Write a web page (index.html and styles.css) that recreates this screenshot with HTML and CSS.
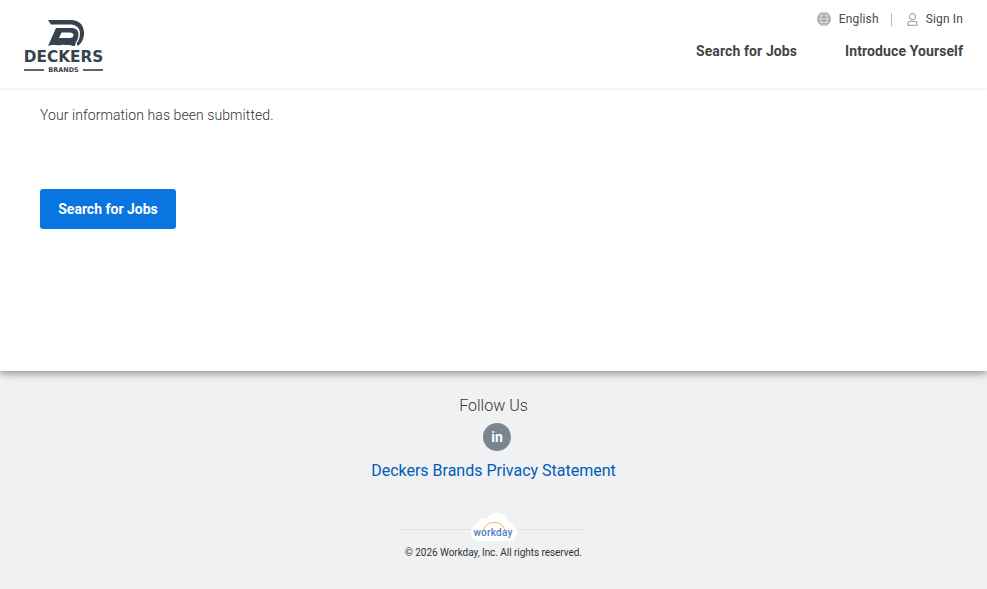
FILE: index.html
```html
<!DOCTYPE html>
<html lang="en">
<head>
    <meta charset="UTF-8">
    <meta name="viewport" content="width=device-width, initial-scale=1.0">
    <title>Deckers Brands Careers</title>
    <link rel="stylesheet" href="styles.css">
</head>
<body>
    <header class="header">
        <a class="logo" href="#">
            <svg class="logo-mark" width="36" height="27" viewBox="0 0 36 27">
                <path fill="#36424d" d="M0 0H23C31 0 36 5 36 13C36 19 33.500 23 30 26L28.500 23.500C30.500 21 32 17.500 32 13.500C32 8 28 4.500 23 4.500H3Z"/>
                <path fill="#36424d" fill-rule="evenodd" d="M8 8H23C27.500 8 30.500 10 30.500 14C30.500 18 29 21 27.500 23C27.500 25 27 26 26 26C24 26 23 24.500 20.500 25C18 25.500 16 24 13 25C9 26 5 24 0 26ZM13.500 12.500L11 18H22C24 18 25.500 17 25.500 15C25.500 13.500 24 12.500 22 12.500Z"/>
            </svg>
            <span class="logo-name">DECKERS</span>
            <span class="logo-sub"><i></i>BRANDS<i></i></span>
        </a>
        <div class="header-right">
            <div class="utility">
                <a class="utility-item" href="#">
                    <svg width="14" height="14" viewBox="0 0 14 14" fill="none" stroke="#e4e5e6" stroke-width="0.8">
                        <circle cx="7" cy="7" r="7" fill="#a6a9ad" stroke="none"/>
                        <ellipse cx="7" cy="7" rx="3" ry="6.500"/>
                        <path d="M0.500 7H13.500M1.500 3.800H12.500M1.500 10.200H12.500"/>
                    </svg>
                    English
                </a>
                <span class="utility-sep"></span>
                <a class="utility-item" href="#">
                    <svg width="11" height="13" viewBox="0 0 11 13" fill="none" stroke="#a9adb1" stroke-width="1.200">
                        <circle cx="5.500" cy="3.700" r="3"/>
                        <path d="M1 12.400V10.500C1 9.200 2.200 8.400 3.500 8.400H7.500C8.800 8.400 10 9.200 10 10.500V12.400Z"/>
                    </svg>
                    Sign In
                </a>
            </div>
            <nav class="nav">
                <a href="#">Search for Jobs</a>
                <a href="#">Introduce Yourself</a>
            </nav>
        </div>
    </header>

    <main class="main">
        <p class="message">Your information has been submitted.</p>
        <a class="btn" href="#">Search for Jobs</a>
    </main>

    <footer class="footer">
        <div class="follow">Follow Us</div>
        <a class="social" href="#">in</a>
        <a class="privacy" href="#">Deckers Brands Privacy Statement</a>
        <div class="powered">
            <svg class="cloud" width="46" height="30" viewBox="0 0 46 30">
                <path fill="#fff" d="M7 29C2 29 0 25 0 21C0 16 3 13 6 12C7 7 12 5 16 7C18 2 24 0 29 1C34 2 37 6 37 10C42 11 46 15 46 20C46 25 43 29 38 29Z"/>
                <path fill="none" stroke="#f2b73f" stroke-width="1" d="M12.500 18C15 8 31 8 34 18"/>
                <text x="22" y="23.500" text-anchor="middle" class="cloud-text">workday</text>
            </svg>
        </div>
        <div class="copyright">© 2026 Workday, Inc. All rights reserved.</div>
    </footer>
</body>
</html>
```

FILE: styles.css
```css
* {
    box-sizing: border-box;
}
html, body {
    height: 100%;
}
body {
    margin: 0;
    font-family: Roboto, "Liberation Sans", sans-serif;
    color: #333;
    background: #f0f1f2;
    overflow: hidden;
}
a {
    text-decoration: none;
    color: inherit;
}
.header {
    height: 88px;
    display: flex;
    justify-content: space-between;
    padding: 0 24px;
    background: #fff;
    box-shadow: 0 1px 4px rgba(0, 0, 0, 0.08);
    position: relative;
    z-index: 1;
}
.logo {
    width: 79px;
    padding-top: 20px;
    display: flex;
    flex-direction: column;
    align-items: center;
    font-family: "DejaVu Sans", sans-serif;
    color: #36424d;
}
.logo-mark {
    display: block;
    flex: none;
    margin-left: 5px;
}
.logo-name {
    margin-top: 1px;
    font-size: 15.300px;
    line-height: 18px;
    font-weight: 700;
    white-space: nowrap;
}
.logo-sub {
    width: 100%;
    display: flex;
    align-items: center;
    justify-content: space-between;
    font-size: 6.500px;
    line-height: 8px;
    font-weight: 700;
}
.logo-sub i {
    width: 20px;
    height: 1.500px;
    background: #5d666e;
}
.header-right {
    display: flex;
    flex-direction: column;
    align-items: flex-end;
}
.utility {
    display: flex;
    align-items: center;
    height: 14px;
    margin-top: 12px;
    font-size: 12px;
    letter-spacing: 0.150px;
    color: #4a4a4a;
}
.utility-item {
    display: flex;
    align-items: center;
    gap: 8px;
}
.utility-sep {
    width: 1px;
    height: 13px;
    margin: 0 15px 0 12px;
    background: #b5b8bc;
}
.nav {
    display: flex;
    gap: 48px;
    margin-top: 11px;
    font-size: 14px;
    line-height: 28px;
    font-weight: 700;
    letter-spacing: 0.100px;
    color: #444;
}
.main {
    height: 283px;
    padding: 17px 40px 0;
    background: #fff;
    box-shadow: 0 2px 8px rgba(0, 0, 0, 0.45);
    position: relative;
}
.message {
    margin: 0;
    font-size: 14px;
    line-height: 20px;
    font-weight: 300;
    letter-spacing: 0.080px;
    color: #333;
}
.btn {
    display: inline-block;
    margin-top: 64px;
    width: 136px;
    height: 40px;
    line-height: 40px;
    text-align: center;
    font-size: 14px;
    font-weight: 700;
    color: #fff;
    background: #0875e1;
    border-radius: 3px;
}
.footer {
    display: flex;
    flex-direction: column;
    align-items: center;
    padding-top: 25px;
}
.follow {
    font-size: 16px;
    line-height: 20px;
    font-weight: 300;
    color: #333;
}
.social {
    width: 28px;
    height: 28px;
    margin: 7px 0 0 7px;
    border-radius: 50%;
    background: #7b858f;
    color: #fff;
    font-size: 14px;
    font-weight: 700;
    line-height: 28px;
    text-align: center;
}
.privacy {
    margin-top: 10px;
    font-size: 16px;
    line-height: 20px;
    color: #005cb9;
}
.powered {
    width: 187px;
    height: 30px;
    margin-top: 31px;
    display: flex;
    justify-content: center;
    background: linear-gradient(#e0e2e4, #e0e2e4) 0 17px / 100% 1px no-repeat;
}
.cloud {
    display: block;
}
.cloud-text {
    font-family: Roboto, sans-serif;
    font-size: 10px;
    font-weight: 500;
    letter-spacing: 0.200px;
    fill: #4f81bd;
}
.copyright {
    margin-top: 4px;
    font-size: 10px;
    line-height: 14px;
    letter-spacing: -0.050px;
    color: #333;
}
```
